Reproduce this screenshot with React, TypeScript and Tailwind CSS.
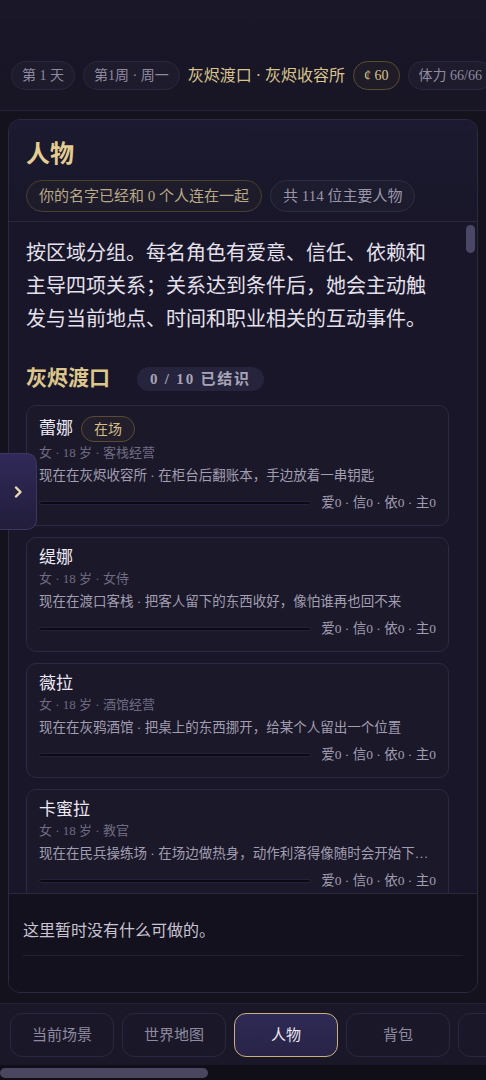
import React from 'react'

const font = {fontFamily: '"Liberation Serif", "Noto Sans CJK SC", serif'}

type Person = {
    name: string
    here?: boolean
    meta: string
    now: string
}

const people: Person[] = [
    {name: '蕾娜', here: true, meta: '女 · 18 岁 · 客栈经营', now: '现在在灰烬收容所 · 在柜台后翻账本，手边放着一串钥匙'},
    {name: '缇娜', meta: '女 · 18 岁 · 女侍', now: '现在在渡口客栈 · 把客人留下的东西收好，像怕谁再也回不来'},
    {name: '薇拉', meta: '女 · 18 岁 · 酒馆经营', now: '现在在灰鸦酒馆 · 把桌上的东西挪开，给某个人留出一个位置'},
    {name: '卡蜜拉', meta: '女 · 18 岁 · 教官', now: '现在在民兵操练场 · 在场边做热身，动作利落得像随时会开始下一轮训练'},
]

const tabs = ['当前场景', '世界地图', '人物', '背包', '日志']

function PersonCard({p}: {p: Person}) {
    return (
        <div className="rounded-[10px] border border-[#2c2a40] bg-[#1a1829] px-[12px] pt-[10px] pb-[12px]">
            <div className={`flex items-center gap-[8px] ${p.here ? 'h-[26px]' : 'h-[20px]'}`}>
                <span className="text-[17px] leading-[20px] text-[#ece8f4]">{p.name}</span>
                {p.here && (
                    <span className="flex h-[26px] items-center rounded-full border border-[#5a4c30] bg-[#221e2c] px-[12px] text-[14px] text-[#d6bf86]">
                        在场
                    </span>
                )}
            </div>
            <div className="mt-[2px] text-[13px] leading-[18px] text-[#6f6b82]">{p.meta}</div>
            <div className="mt-[5px] truncate text-[13.5px] leading-[18px] text-[#a29eb2]">{p.now}</div>
            <div className="mt-[8px] flex h-[20px] items-center gap-[10px]">
                <div className="h-[4px] flex-1 rounded-full border border-[#24223a] bg-[#0b0a12]"/>
                <span className="text-[13.5px] text-[#a29eb2]">爱0 · 信0 · 依0 · 主0</span>
            </div>
        </div>
    )
}

export default function App() {
    return (
        <div className="relative flex h-[1080px] w-[486px] flex-col overflow-hidden bg-[#14121d]" style={font}>
            {/* top status */}
            <div className="flex h-[111px] shrink-0 items-start gap-[8px] overflow-hidden whitespace-nowrap border-b border-[#25233a] bg-gradient-to-b from-[#191728] to-[#181625] px-[11px] pt-[61px]">
                <span className="flex h-[29px] shrink-0 items-center rounded-full border border-[#2a2840] bg-[#1d1b2c] px-[10px] text-[14px] text-[#8f8aa0]">第 1 天</span>
                <span className="flex h-[29px] shrink-0 items-center rounded-full border border-[#2a2840] bg-[#1d1b2c] px-[10px] text-[14px] text-[#8f8aa0]">第1周 · 周一</span>
                <span className="flex h-[29px] shrink-0 items-center text-[16px] text-[#d9c48e]">灰烬渡口 · 灰烬收容所</span>
                <span className="flex h-[29px] shrink-0 items-center rounded-full border border-[#5a4d30] bg-[#1f1c28] px-[10px] text-[14px] text-[#d9c48e]">¢ 60</span>
                <span className="flex h-[29px] shrink-0 items-center rounded-full border border-[#2a2840] bg-[#1d1b2c] px-[10px] text-[14px] text-[#8f8aa0]">体力 66/66</span>
            </div>

            {/* panel */}
            <div className="flex-1 px-[8px] pt-[8px]">
                <div className="flex h-[874px] flex-col overflow-hidden rounded-[12px] border border-[#2c2a40] bg-[#181628]">
                    <div className="shrink-0 border-b border-[#2a283c] bg-gradient-to-b from-[#1c1a30] to-[#181628] px-[17px] pt-[16px] pb-[9px]">
                        <h1 className="text-[24px] font-bold leading-[36px] text-[#e3cd92]">人物</h1>
                        <div className="mt-[8px] flex gap-[8px]">
                            <span className="flex h-[32px] items-center rounded-full border border-[#4a4030] bg-[#1e1b2a] px-[12px] text-[15px] text-[#b9aa88]">你的名字已经和 0 个人连在一起</span>
                            <span className="flex h-[32px] items-center rounded-full border border-[#2e2c42] bg-[#1d1b2e] px-[12px] text-[15px] text-[#9a96aa]">共 114 位主要人物</span>
                        </div>
                    </div>

                    <div className="relative flex-1 overflow-hidden pl-[17px] pr-[28px]">
                        <div className="absolute right-[2px] top-[3px] h-[28px] w-[9px] rounded-full bg-[#4a4666]"/>
                        <p className="max-w-[414px] pt-[15px] text-[20px] leading-[33px] text-[#e4e0ec]">
                            按区域分组。每名角色有爱意、信任、依赖和主导四项关系；关系达到条件后，她会主动触发与当前地点、时间和职业相关的互动事件。
                        </p>
                        <div className="mt-[31px] flex h-[24px] items-center gap-[27px]">
                            <h2 className="text-[21px] font-bold text-[#dcc68c]">灰烬渡口</h2>
                            <span className="flex h-[24px] items-center rounded-full bg-[#26243c] px-[13px] text-[15px] font-bold tracking-[0.12em] text-[#a8a4b8]">0 / 10 已结识</span>
                        </div>
                        <div className="mt-[14px] flex flex-col gap-[11px]">
                            {people.map(p => <PersonCard key={p.name} p={p}/>)}
                        </div>
                    </div>

                    <div className="h-[99px] shrink-0 border-t border-[#2a283c] bg-[#13111d] px-[14px] pt-[25px]">
                        <div className="border-b border-[#22202f] pb-[12px] text-[16px] leading-[24px] text-[#c8c4d4]">这里暂时没有什么可做的。</div>
                    </div>
                </div>
            </div>

            {/* side toggle */}
            <div className="absolute left-0 top-[453px] flex h-[77px] w-[37px] items-center justify-center rounded-r-[10px] border border-l-0 border-[#3b3660] bg-gradient-to-b from-[#30295a] to-[#211d3a]">
                <svg width="10" height="14" viewBox="0 0 10 14" fill="none">
                    <path d="M3 2.5L7.5 7L3 11.5" stroke="#eadcb2" strokeWidth="2.4" strokeLinecap="round" strokeLinejoin="round"/>
                </svg>
            </div>

            {/* bottom nav */}
            <div className="mt-[8px] shrink-0 border-t border-[#24223a] bg-[#1a1828]">
                <div className="flex gap-[8px] overflow-hidden px-[10px] pt-[9px] pb-[8px]">
                    {tabs.map(t => (
                        <div
                            key={t}
                            className={t === '人物'
                                ? 'flex h-[44px] w-[104px] shrink-0 items-center justify-center rounded-[12px] border border-[#c9b27a] bg-gradient-to-b from-[#2f2a55] to-[#282346] text-[15px] text-[#ece8f4]'
                                : 'flex h-[44px] w-[104px] shrink-0 items-center justify-center rounded-[12px] border border-[#2a2840] bg-[#1a1828] text-[15px] text-[#8f8aa0]'}
                        >
                            {t}
                        </div>
                    ))}
                </div>
                <div className="h-[15px] bg-[#100e17] pt-[3px]">
                    <div className="h-[10px] w-[208px] rounded-full bg-[#4a4660]"/>
                </div>
            </div>
        </div>
    )
}
